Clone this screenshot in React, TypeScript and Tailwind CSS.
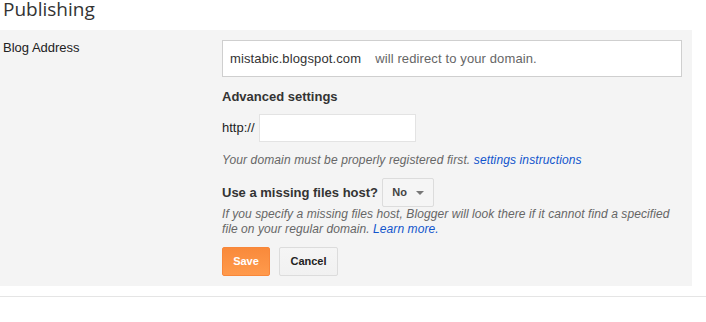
const arial = "font-['Liberation_Sans',Arial,sans-serif]";

const App = () => {
  return (
    <div className={`w-[706px] h-[322px] bg-white ${arial} overflow-hidden`}>
      <h1 className="h-[30px] pl-[3px] pt-[1px] text-[19px] leading-[17px] text-[#333] font-['Open_Sans',sans-serif]">
        Publishing
      </h1>
      <div className="flex w-[692px] h-[256px] bg-[#f4f4f4]">
        <div className="w-[222px] pl-[3px] pt-[10px] text-[13px] leading-[15px] text-[#222]">Blog Address</div>
        <div className="w-[460px] pt-[10px] flex flex-col">
          <div className="h-[37px] border border-[#cfcfcf] bg-white px-[7px] flex items-center text-[13px] tracking-[0.12px]">
            <span className="text-[#333]">mistabic.blogspot.com</span>
            <span className="ml-[14px] text-[#666]">will redirect to your domain.</span>
          </div>
          <div className="mt-[12px] text-[13px] leading-[15px] font-bold text-[#333]">Advanced settings</div>
          <div className="mt-[10px] flex items-center">
            <span className="text-[13px] text-[#222]">http://</span>
            <input
              type="text"
              className="ml-[4px] w-[157px] h-[28px] border border-[#e3e3e3] bg-white outline-none"
            />
          </div>
          <p className="mt-[11px] text-[12px] leading-[15px] italic text-[#666] tracking-[0.12px]">
            Your domain must be properly registered first.{" "}
            <a className="text-[#15c]">settings instructions</a>
          </p>
          <div className="mt-[10px] flex items-center">
            <span className="text-[13px] font-bold text-[#333]">Use a missing files host?</span>
            <button className="ml-[4px] w-[52px] h-[29px] border border-[#dcdcdc] bg-[#f5f5f5] rounded-[2px] flex items-center justify-center gap-[9px] text-[11px] font-bold text-[#444]">
              No
              <span className="w-0 h-0 border-l-[4px] border-r-[4px] border-t-[4px] border-l-transparent border-r-transparent border-t-[#777]" />
            </button>
          </div>
          <p className="text-[12px] leading-[15px] italic text-[#666] pr-[8px] tracking-[0.08px]">
            If you specify a missing files host, Blogger will look there if it cannot find a specified file on your
            regular domain. <a className="text-[#15c]">Learn more.</a>
          </p>
          <div className="mt-[10px] flex gap-[9px]">
            <button className="w-[48px] h-[29px] rounded-[2px] border border-[#f8873a] bg-gradient-to-b from-[#f98a3b] to-[#ff9a4c] text-white text-[11px] font-bold">
              Save
            </button>
            <button className="w-[59px] h-[29px] rounded-[2px] border border-[#dcdcdc] bg-gradient-to-b from-[#f5f5f5] to-[#f1f1f1] text-[#222] text-[11px] font-bold">
              Cancel
            </button>
          </div>
        </div>
      </div>
      <div className="mt-[10px] border-t border-[#e5e5e5]" />
    </div>
  );
};

export default App;
